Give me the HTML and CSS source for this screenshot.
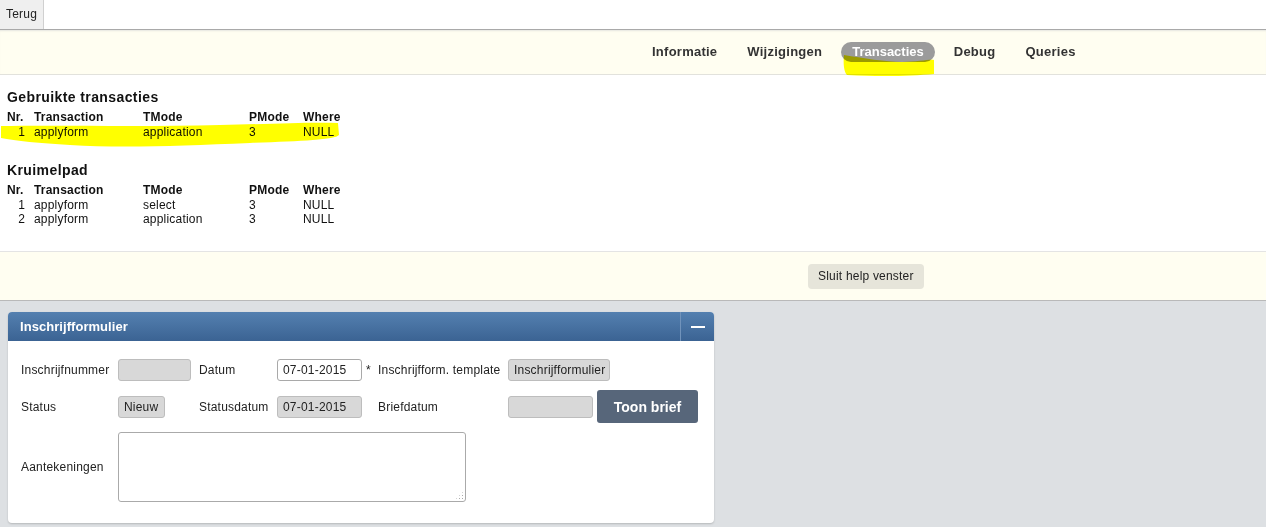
FILE: index.html
```html
<!DOCTYPE html>
<html>
<head>
<meta charset="utf-8">
<title>Transacties</title>
<link rel="stylesheet" href="styles.css">
</head>
<body>
<div class="topbar"><button class="back">Terug</button></div>
<nav class="tabs">
  <a class="tab">Informatie</a>
  <a class="tab">Wijzigingen</a>
  <a class="tab active">Transacties</a>
  <a class="tab">Debug</a>
  <a class="tab">Queries</a>
</nav>
<section class="help">
  <h3 class="title">Gebruikte transacties</h3>
  <div class="tbl">
    <div class="th">Nr.</div><div class="th">Transaction</div><div class="th">TMode</div><div class="th">PMode</div><div class="th">Where</div>
    <div class="num">1</div><div>applyform</div><div>application</div><div>3</div><div>NULL</div>
  </div>
  <h3 class="title second">Kruimelpad</h3>
  <div class="tbl">
    <div class="th">Nr.</div><div class="th">Transaction</div><div class="th">TMode</div><div class="th">PMode</div><div class="th">Where</div>
    <div class="num">1</div><div>applyform</div><div>select</div><div>3</div><div>NULL</div>
    <div class="num">2</div><div>applyform</div><div>application</div><div>3</div><div>NULL</div>
  </div>
</section>
<div class="helpfoot"><button class="close">Sluit help venster</button></div>
<main class="desk">
  <div class="panel">
    <div class="phead"><span class="ptitle">Inschrijfformulier</span><span class="pcollapse"><span class="dash"></span></span></div>
    <div class="pbody">
      <div class="lbl">Inschrijfnummer</div>
      <div class="fld ro w73"></div>
      <div class="lbl">Datum</div>
      <div class="fld wh w85">07-01-2015</div>
      <div class="star">*</div>
      <div class="lbl">Inschrijfform. template</div>
      <div class="fld ro w102">Inschrijfformulier</div>
      <div></div>

      <div class="lbl">Status</div>
      <div class="fld ro w47">Nieuw</div>
      <div class="lbl">Statusdatum</div>
      <div class="fld ro w85">07-01-2015</div>
      <div></div>
      <div class="lbl">Briefdatum</div>
      <div class="fld ro w85"></div>
      <button class="toon">Toon brief</button>

      <div class="lbl">Aantekeningen</div>
      <div class="memo"><span class="grip"></span></div>
    </div>
  </div>
</main>
<svg class="mark mark1" width="345" height="30" viewBox="0 0 345 30"><path d="M1 5 C 60 4, 140 6, 220 4 C 270 3, 310 1, 338 2 L 339 14 C 335 19, 300 20, 250 22 C 180 25, 120 27, 70 24 C 40 22, 15 20, 1 17 Z" fill="#ffff00"/></svg>
<svg class="mark mark2" width="95" height="24" viewBox="0 0 95 24"><path d="M2 1 C 20 4, 45 8, 60 8 C 75 8, 88 5, 92 6 L 92 20 C 70 22, 40 23, 5 21 C 2 18, 1 10, 2 1 Z" fill="#ffff00"/></svg>
</body>
</html>
```
FILE: styles.css
```css
html, body {
  margin: 0;
  padding: 0;
}
body {
  font-family: "Liberation Sans", Arial, sans-serif;
  font-size: 12px;
  letter-spacing: 0.2px;
  color: #222;
  background: #dde0e3;
  position: relative;
}
.topbar {
  height: 29px;
  background: #fff;
  border-bottom: 1px solid #a9a9a9;
  display: flex;
}
.back {
  width: 44px;
  height: 29px;
  margin: 0;
  padding: 0 0 2px 0;
  border: none;
  border-right: 1px solid #d0d0d0;
  background: #efefef;
  font-family: inherit;
  font-size: 12px;
  letter-spacing: 0.2px;
  color: #222;
}
.tabs {
  height: 44px;
  background: #fffef1;
  border-bottom: 1px solid #e2e2dc;
  display: flex;
  align-items: center;
  gap: 8px;
  padding-left: 641px;
  box-shadow: inset 0 2px 2px -1px #e6e6e0;
}
.tab {
  font-weight: bold;
  font-size: 13px;
  letter-spacing: 0.25px;
  color: #333;
  padding: 0 11px;
  line-height: 20px;
  height: 20px;
  border-radius: 10px;
}
.tab.active {
  background: #9b9b9b;
  color: #fff;
  letter-spacing: 0;
}
.help {
  background: #fff;
  padding: 14px 0 0 7px;
  height: 162px;
  border-bottom: 1px solid #e4e4e4;
}
.title {
  margin: 0;
  font-size: 14px;
  letter-spacing: 0.4px;
  line-height: 16px;
  font-weight: bold;
  color: #111;
}
.title.second {
  margin-top: 23px;
}
.tbl {
  margin-top: 5px;
  display: grid;
  grid-template-columns: 27px 109px 106px 54px 60px;
  line-height: 14.5px;
  color: #111;
}
.th {
  font-weight: bold;
}
.num {
  text-align: right;
  padding-right: 9px;
}
.helpfoot {
  height: 48px;
  background: #fffef1;
  border-bottom: 1px solid #b9b9b9;
  display: flex;
  align-items: center;
  padding-left: 808px;
}
.close {
  height: 25px;
  padding: 0 10px;
  border: none;
  border-radius: 4px;
  background: #e6e5da;
  font-family: inherit;
  font-size: 12px;
  letter-spacing: 0.2px;
  color: #222;
}
.desk {
  padding: 11px 8px 4px 8px;
  height: 211px;
}
.panel {
  width: 706px;
  height: 211px;
  background: #fff;
  border-radius: 4px;
  box-shadow: 0 1px 2px rgba(0,0,0,0.18);
  overflow: hidden;
}
.phead {
  height: 29px;
  background: linear-gradient(#5480b0, #3b6393);
  display: flex;
  align-items: center;
  justify-content: space-between;
}
.ptitle {
  color: #fff;
  font-weight: bold;
  font-size: 13px;
  letter-spacing: 0.05px;
  padding-left: 12px;
}
.pcollapse {
  width: 33px;
  height: 29px;
  border-left: 1px solid #7193bb;
  display: flex;
  align-items: center;
  justify-content: center;
}
.dash {
  width: 14px;
  height: 2px;
  background: #fff;
}
.pbody {
  padding: 18px 0 0 13px;
  display: grid;
  grid-template-columns: 97px 81px 78px 89px 12px 130px 89px auto;
  grid-template-rows: 22px 33px 70px;
  row-gap: 9px;
  align-items: center;
}
.lbl {
  color: #222;
  white-space: nowrap;
}
.star {
  align-self: start;
  padding-top: 4px;
  padding-left: 0;
}
.fld {
  height: 20px;
  line-height: 20px;
  border: 1px solid #bdbdbd;
  border-radius: 3px;
  padding-left: 5px;
  box-sizing: content-box;
  color: #222;
  white-space: nowrap;
}
.fld.ro {
  background: #d8d8d8;
}
.fld.wh {
  background: #fff;
  border-color: #a9a9a9;
}
.w73 { width: 66px; }
.w85 { width: 78px; }
.w47 { width: 40px; }
.w102 { width: 95px; }
.toon {
  width: 101px;
  height: 33px;
  margin-left: 0;
  border: none;
  border-radius: 3px;
  background: #57667a;
  color: #fff;
  font-family: inherit;
  font-weight: bold;
  font-size: 14px;
  letter-spacing: 0;
  padding: 0;
}
.memo {
  grid-column: 2 / 7;
  width: 346px;
  height: 68px;
  border: 1px solid #aaa;
  border-radius: 3px;
  position: relative;
}
.grip {
  position: absolute;
  right: 1px;
  bottom: 1px;
  width: 9px;
  height: 9px;
  background-image: radial-gradient(circle, #aaa 0.8px, transparent 1px);
  background-size: 3px 3px;
  clip-path: polygon(100% 0, 100% 100%, 0 100%);
}
.mark {
  position: absolute;
  mix-blend-mode: multiply;
}
.mark1 {
  left: 0;
  top: 121px;
}
.mark2 {
  left: 842px;
  top: 54px;
}
```
